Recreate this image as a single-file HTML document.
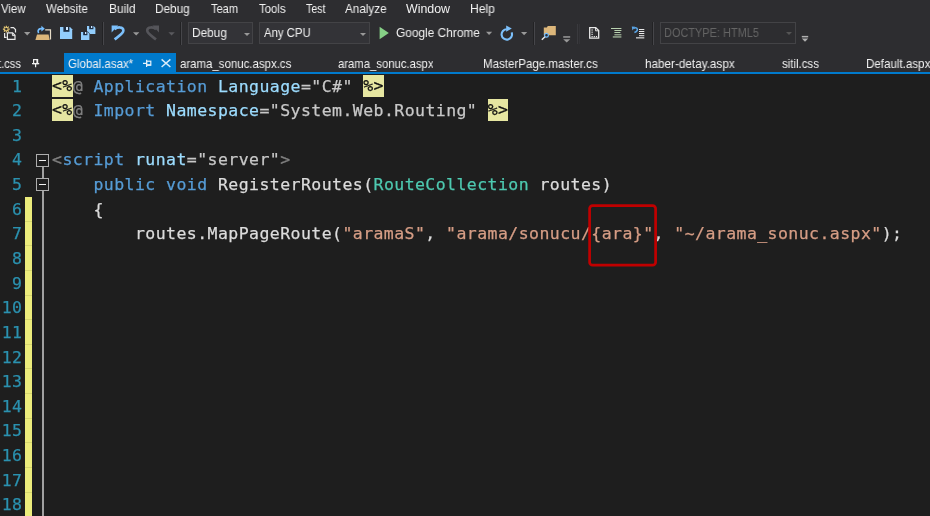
<!DOCTYPE html>
<html><head><meta charset="utf-8"><title>Global.asax</title>
<style>
*{box-sizing:border-box;margin:0;padding:0}
html,body{width:930px;height:516px;overflow:hidden;background:#2d2d30}
body{position:relative;font-family:"Liberation Sans",sans-serif;font-size:12px;color:#f1f1f1}
.abs{position:absolute;white-space:nowrap}
#menu span{position:absolute;top:1px;line-height:16px;font-size:12.4px;color:#f1f1f1;white-space:nowrap;transform-origin:0 50%;will-change:transform}
#tabs{position:absolute;left:0;top:53px;width:930px;height:19px}
#tabs span{position:absolute;top:2.5px;line-height:16px;font-size:12.2px;color:#f1f1f1;white-space:nowrap;transform-origin:0 50%;will-change:transform}
#tabline{position:absolute;left:0;top:72px;width:930px;height:2px;background:#007acc}
#acttab{position:absolute;left:64px;top:53px;width:112px;height:19px;background:#007acc}
.combo{position:absolute;top:22px;height:22px;background:#333337;border:1px solid #434346}
.combo span,#toolbar>span{position:absolute;top:2px;line-height:16px;font-size:12.3px;color:#f1f1f1;white-space:nowrap;transform-origin:0 50%;will-change:transform}
.dd{position:absolute;width:0;height:0;border-left:3px solid transparent;border-right:3px solid transparent;border-top:3px solid #999}
#ed{position:absolute;left:0;top:74px;width:930px;height:442px;background:#1e1e1e;overflow:hidden;
 font-family:"DejaVu Sans Mono","Liberation Mono",monospace;font-size:16.5px;letter-spacing:0.437px}
.ln{will-change:transform;-webkit-text-stroke:0.25px;position:absolute;left:0;width:22.4px;text-align:right;color:#2b91af;height:24.64px;line-height:24.64px;white-space:pre}
.cl{will-change:transform;-webkit-text-stroke:0.25px;position:absolute;left:52px;height:24.64px;line-height:24.64px;white-space:pre;color:#dcdcdc}
.k{color:#569cd6}.t{color:#4ec9b0}.s{color:#d69d85}.a{color:#9cdcfe}.g{color:#808080}.v{color:#c8c8c8}
.h{background:#e6e6a1;color:#111;display:inline-block;height:22px;line-height:22px;vertical-align:top}
</style></head><body>
<div id="menu">
<span style="left:1.2px;transform:scaleX(0.923);">View</span><span style="left:46.2px;transform:scaleX(0.938);">Website</span><span style="left:108.5px;transform:scaleX(0.963);">Build</span><span style="left:155.2px;transform:scaleX(0.952);">Debug</span><span style="left:210.6px;transform:scaleX(0.892);">Team</span><span style="left:258.7px;transform:scaleX(0.918);">Tools</span><span style="left:305.5px;transform:scaleX(0.859);">Test</span><span style="left:345px;transform:scaleX(0.943);">Analyze</span><span style="left:406.1px;transform:scaleX(0.993);">Window</span><span style="left:470.2px;transform:scaleX(0.977);">Help</span>
</div>
<div id="toolbar">
<div class="combo" style="left:188px;width:65px"><span style="left:3px;transform:scaleX(0.960);">Debug</span><i class="dd" style="left:54.5px;top:9.5px"></i></div>
<div class="combo" style="left:259px;width:110.5px"><span style="left:3.7px;transform:scaleX(0.923);">Any CPU</span><i class="dd" style="left:99.5px;top:9.5px"></i></div>
<span style="left:396.4px;transform:scaleX(0.966);top:25px">Google Chrome</span>
<div class="combo" style="left:660px;width:135.5px;background:#2d2d30;border-color:#434346"><span style="left:3.2px;transform:scaleX(0.890);color:#656565">DOCTYPE: HTML5</span><i class="dd" style="left:124.5px;top:9px;border-top-color:#555"></i></div>
</div>
<div id="acttab"></div>
<div id="tabs">
<span style="left:-1.8px;transform:scaleX(0.915);">t.css</span><span style="left:68.4px;transform:scaleX(0.944);">Global.asax*</span><span style="left:180.1px;transform:scaleX(0.939);">arama_sonuc.aspx.cs</span><span style="left:338.4px;transform:scaleX(0.927);">arama_sonuc.aspx</span><span style="left:482.6px;transform:scaleX(0.946);">MasterPage.master.cs</span><span style="left:644.8px;transform:scaleX(0.961);">haber-detay.aspx</span><span style="left:782.2px;transform:scaleX(0.939);">sitil.css</span><span style="left:866.4px;transform:scaleX(0.950);">Default.aspx</span>
</div>
<div id="tabline"></div>
<svg id="icons" class="abs" style="left:0;top:0" width="930" height="74" viewBox="0 0 930 74">
<!-- new item -->
<g fill="none" stroke="#e8e8e8" stroke-width="1.2">
<path d="M10.5 27.6h3l2 2v3"/><path d="M4.6 33v4.4h2"/>
<path d="M7.4 32.9h5.2l2.4 2.4v4H7.4z"/>
</g>
<path d="M12.4 33v2.6H15" fill="none" stroke="#e8e8e8" stroke-width="1"/>
<g stroke="#f5d57a" stroke-width="1.1"><path d="M6.3 25.7v2.2M6.3 30.3v2.2M2.9 29.1h2.2M7.500 29.1h2.200M3.900 26.700l1.500 1.500M7.200 30l1.500 1.500M8.700 26.700l-1.500 1.500M5.400 30l-1.500 1.500"/></g>
<path d="M24 32h6.4l-3.2 3.4z" fill="#999"/>
<!-- open -->
<path d="M45.2 29.9h5.3v9.6" fill="none" stroke="#e6dcc8" stroke-width="1.2"/>
<path d="M35.4 40l1.6-5.4h11.6l1 5.4z" fill="#dcb67a"/>
<path d="M38.6 33.2c-1.6-3 .6-5 3.4-4.6" fill="none" stroke="#75beff" stroke-width="1.7"/>
<path d="M41.4 25.8l3.4 2.9-3.4 2.9z" fill="#75beff"/>
<!-- save -->
<path d="M60 27h10l2.2 2.2V39H60z" fill="#92cdfc"/><rect x="63.4" y="26.8" width="6" height="5" fill="#1f2f44"/><rect x="66" y="27" width="2" height="3" fill="#cfe8ff"/>
<!-- save all -->
<path d="M87 26h6.6l1.8 1.8V34H87z" fill="#92cdfc"/><rect x="89.2" y="25.8" width="4.2" height="3.4" fill="#1f2f44"/><rect x="91" y="26" width="1.3" height="2" fill="#cfe8ff"/>
<path d="M80.4 31.6h7.4l2 2V40.4h-9.4z" fill="#2d2d30"/>
<path d="M81 32h6.6l1.8 1.8V40H81z" fill="#92cdfc"/><rect x="83.2" y="31.8" width="4.2" height="3.4" fill="#1f2f44"/><rect x="85" y="32" width="1.3" height="2" fill="#cfe8ff"/>
<rect x="102" y="22" width="1" height="23" fill="#222224"/><rect x="103" y="22" width="1" height="23" fill="#46464a"/>
<!-- undo -->
<path d="M114.500 29.200C117 27 123.400 26.200 123.400 30.600C123.400 33.600 119 36 114.600 39.400" fill="none" stroke="#7cc0fb" stroke-width="2.600"/>
<path d="M111.600 25.600h6.600l-6.600 7z" fill="#7cc0fb"/>
<path d="M133 32.200h6.400l-3.200 3.200z" fill="#999"/>
<!-- redo disabled -->
<path d="M156.100 29.200C153.600 27 147.200 26.200 147.200 30.600C147.200 33.600 151.600 36 156 39.400" fill="none" stroke="#55555a" stroke-width="2.600"/>
<path d="M159 25.600h-6.600l6.600 7z" fill="#55555a"/>
<path d="M168.400 32.200h6.400l-3.200 3.200z" fill="#5a5a5e"/>
<rect x="180" y="22" width="1" height="23" fill="#222224"/><rect x="181" y="22" width="1" height="23" fill="#46464a"/>
<!-- play -->
<path d="M379.600 26.800l9.200 6.200-9.200 6.200z" fill="#86d086"/>
<path d="M486 31.800h6.200l-3.100 3.200z" fill="#999"/>
<!-- refresh -->
<path d="M506.800 29.200A5.200 5.200 0 1 0 511.600 32.400" fill="none" stroke="#7cc0fb" stroke-width="2.100"/>
<path d="M506.200 25.500L511.800 28.600L506.200 31.700Z" fill="#7cc0fb"/>
<path d="M521 32h6.200l-3.100 3.200z" fill="#999"/>
<rect x="533" y="22" width="1" height="23" fill="#222224"/><rect x="534" y="22" width="1" height="23" fill="#46464a"/>
<!-- find in files -->
<path d="M543.800 27.600h3l1-1.600h8v9.200h-12z" fill="#dcb67a"/>
<circle cx="546.500" cy="35.200" r="1.900" fill="#2d2d30" stroke="#75beff" stroke-width="1.200"/>
<path d="M545 36.800l-3.200 3" stroke="#e8e8e8" stroke-width="1.500"/>
<rect x="563.200" y="36.200" width="7" height="1.500" fill="#999"/><path d="M563.200 39.200h7l-3.500 3.200z" fill="#999"/>
<g fill="#3a3a3e"><rect x="577" y="24" width="1" height="20"/><rect x="579" y="24" width="1" height="20" opacity=".5"/></g>
<!-- doc outline -->
<path d="M589.700 27.600h6l3 3v7.600h-9z" fill="none" stroke="#e8e8e8" stroke-width="1.300"/>
<path d="M595.600 27.600v3.200h3.200" fill="none" stroke="#e8e8e8" stroke-width="1"/>
<g fill="#e8e8e8"><rect x="591.500" y="29.400" width="1.200" height="1.200"/><rect x="591.500" y="31.600" width="1.200" height="1.200"/><rect x="591.500" y="33.800" width="1.200" height="1.200"/><rect x="591.500" y="36" width="1.200" height="1.200"/><rect x="593.700" y="36" width="1.200" height="1.200"/><rect x="595.900" y="36" width="1.200" height="1.200"/></g>
<!-- indent -->
<g fill="#b9d2b0"><rect x="611" y="28" width="10.400" height="1"/><rect x="614.400" y="30" width="7" height="1"/><rect x="614.400" y="32" width="6" height="1"/><rect x="614.400" y="34.300" width="7" height="1"/><rect x="612.800" y="36.400" width="8.600" height="1.100"/></g>
<!-- format -->
<g fill="#e8e8e8"><rect x="639" y="29" width="5.300" height="1"/><rect x="639" y="31" width="5.300" height="1"/><rect x="639" y="33" width="5.300" height="1"/><rect x="639" y="35.200" width="5.300" height="1"/><rect x="636" y="37.300" width="8.300" height="1.100"/></g>
<path d="M633.600 28.400c2.600-1.600 4.400 .2 3.600 2-.4 1-1.600 1.800-2.800 2.200" fill="none" stroke="#5aa5e6" stroke-width="1.600"/><path d="M631.800 26.600l3.400 .2-2.800 3.600z" fill="#5aa5e6"/>
<rect x="652" y="22" width="1" height="23" fill="#222224"/><rect x="653" y="22" width="1" height="23" fill="#46464a"/>
<rect x="801.800" y="35.900" width="6.400" height="1.500" fill="#b0b0b0"/><path d="M801.800 38.400h6.400l-3.200 3.300z" fill="#b0b0b0"/>
<!-- tab pins -->
<g fill="none" stroke="#f1f1f1" stroke-width="1.200"><rect x="33.600" y="59.600" width="4" height="4"/><path d="M32 63.600h7.200M35.600 63.600v3.600"/></g><rect x="36.400" y="59.600" width="1.400" height="4" fill="#f1f1f1"/>
<g fill="none" stroke="#e4f1fb" stroke-width="1.200"><rect x="146.600" y="61.200" width="4.200" height="4"/><path d="M146.600 59.800v7.200M143 63.400h3.600"/></g><rect x="146.600" y="64.200" width="4.200" height="1.400" fill="#e4f1fb"/>
<path d="M161.600 59.400l8.800 7.600M170.400 59.400l-8.800 7.600" stroke="#d9ecfa" stroke-width="1.450" fill="none"/>
</svg>
<div id="ed">
<div class="ln" style="top:0.50px">1</div>
<div class="cl" style="top:0.50px"><span class="h">&lt;%</span><span class="g">@</span> <span class="k">Application</span> <span class="a">Language</span><span class="v">="C#"</span> <span class="h">%&gt;</span></div>
<div class="ln" style="top:25.14px">2</div>
<div class="cl" style="top:25.14px"><span class="h">&lt;%</span><span class="g">@</span> <span class="k">Import</span> <span class="a">Namespace</span><span class="v">="System.Web.Routing"</span> <span class="h">%&gt;</span></div>
<div class="ln" style="top:49.78px">3</div>
<div class="ln" style="top:74.42px">4</div>
<div class="cl" style="top:74.42px"><span class="g">&lt;</span><span class="k">script</span> <span class="a">runat</span><span class="v">="server"</span><span class="g">&gt;</span></div>
<div class="ln" style="top:99.06px">5</div>
<div class="cl" style="top:99.06px">    <span class="k">public</span> <span class="k">void</span> RegisterRoutes(<span class="t">RouteCollection</span> routes)</div>
<div class="ln" style="top:123.70px">6</div>
<div class="cl" style="top:123.70px">    {</div>
<div class="ln" style="top:148.34px">7</div>
<div class="cl" style="top:148.34px">        routes.MapPageRoute(<span class="s">"aramaS"</span>, <span class="s">"arama/sonucu/{ara}"</span>, <span class="s">"~/arama_sonuc.aspx"</span>);</div>
<div class="ln" style="top:172.98px">8</div>
<div class="ln" style="top:197.62px">9</div>
<div class="ln" style="top:222.26px">10</div>
<div class="ln" style="top:246.90px">11</div>
<div class="ln" style="top:271.54px">12</div>
<div class="ln" style="top:296.18px">13</div>
<div class="ln" style="top:320.82px">14</div>
<div class="ln" style="top:345.46px">15</div>
<div class="ln" style="top:370.10px">16</div>
<div class="ln" style="top:394.74px">17</div>
<div class="ln" style="top:419.38px">18</div>
<div class="abs" style="left:25px;top:123.20px;width:7.3px;height:330px;background:repeating-linear-gradient(to bottom,#ecec7c 0,#ecec7c 23.64px,#d6d66e 23.64px,#d6d66e 24.64px)"></div>
<div class="abs" style="left:42.4px;top:92px;width:1.3px;height:352px;background:#a0a0a0"></div>
<div class="abs" style="left:36px;top:80px;width:13px;height:13px;border:1px solid #adadad;background:#1e1e1e"><i style="position:absolute;left:1.8px;top:4.5px;width:7.4px;height:1.6px;background:#f0f0f0"></i></div>
<div class="abs" style="left:36px;top:104px;width:13px;height:13px;border:1px solid #adadad;background:#1e1e1e"><i style="position:absolute;left:1.8px;top:4.5px;width:7.4px;height:1.6px;background:#f0f0f0"></i></div>
<svg class="abs" style="left:586px;top:128px" width="74" height="68" viewBox="0 0 74 68"><rect x="3.6" y="3.6" width="66" height="59.6" rx="3" ry="3" fill="none" stroke="#c00000" stroke-width="2.7"/></svg>
</div>
</body></html>
